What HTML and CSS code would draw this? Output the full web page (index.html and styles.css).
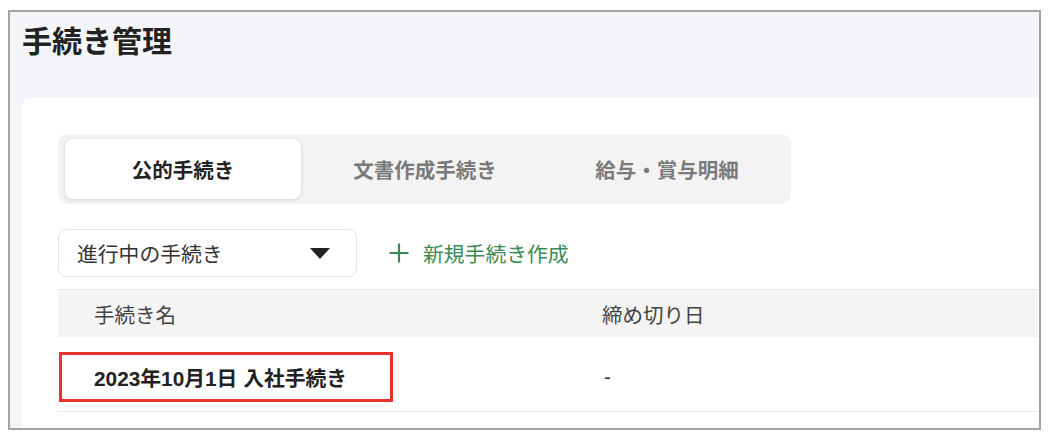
FILE: index.html
```html
<!DOCTYPE html>
<html lang="ja">
<head>
    <meta charset="UTF-8">
    <meta name="viewport" content="width=device-width, initial-scale=1.0">
    <title>手続き管理</title>
    <link rel="stylesheet" href="styles.css">
</head>
<body>
    <div class="frame">
        <h1 class="page-title">手続き管理</h1>

        <div class="card">
            <div class="tabs">
                <button class="tab active">公的手続き</button>
                <button class="tab">文書作成手続き</button>
                <button class="tab">給与・賞与明細</button>
            </div>

            <div class="toolbar">
                <div class="select">
                    <span>進行中の手続き</span>
                    <span class="caret"></span>
                </div>
                <button class="new-btn">
                    <svg width="22" height="22" viewBox="0 0 22 22" aria-hidden="true">
                        <path d="M11 1.5v19M1.5 11h19" stroke="currentColor" stroke-width="2.2" fill="none"/>
                    </svg>
                    新規手続き作成
                </button>
            </div>

            <div class="list">
                <div class="list-head">
                    <div class="col-name">手続き名</div>
                    <div>締め切り日</div>
                </div>
                <div class="list-row">
                    <div>
                        <div class="highlight">2023年10月1日 入社手続き</div>
                    </div>
                    <div class="col-date">-</div>
                </div>
            </div>
        </div>
    </div>
</body>
</html>
```

FILE: styles.css
```css
body {
    margin: 0;
    background: #fff;
    font-family: "Liberation Sans", "Noto Sans CJK JP", sans-serif;
    color: #222;
}
.frame {
    box-sizing: border-box;
    width: 1033px;
    height: 420px;
    margin: 10px 0 0 8px;
    padding: 15px 0 0 12px;
    border: 2px solid #a3a3a3;
    background: #f4f5f9;
    overflow: hidden;
}
.page-title {
    margin: 0;
    font-size: 30px;
    line-height: 30px;
    font-weight: bold;
    color: #222;
}
.card {
    margin-top: 41px;
    height: 400px;
    padding: 36px 0 0 36px;
    background: #fff;
    border-radius: 8px 0 0 0;
}
.tabs {
    display: grid;
    grid-template-columns: repeat(3, 236px);
    gap: 6px;
    width: max-content;
    padding: 5px 6px 5px 7px;
    background: #f3f3f3;
    border-radius: 10px;
}
.tab {
    height: 60px;
    border: none;
    border-radius: 8px;
    background: transparent;
    font-family: inherit;
    font-size: 20.5px;
    font-weight: bold;
    color: #7a7a7a;
    cursor: pointer;
}
.tab.active {
    background: #fff;
    color: #222;
    box-shadow: 0 1px 4px rgba(0,0,0,0.13);
}
.toolbar {
    display: flex;
    align-items: center;
    gap: 31px;
    margin-top: 25px;
}
.select {
    box-sizing: border-box;
    width: 299px;
    height: 48px;
    display: flex;
    align-items: center;
    justify-content: space-between;
    padding: 0 26px 0 18px;
    border: 1px solid #e4e4e4;
    border-radius: 8px;
    font-size: 20.8px;
    color: #333;
}
.caret {
    width: 0;
    height: 0;
    border-left: 10px solid transparent;
    border-right: 10px solid transparent;
    border-top: 11px solid #222;
}
.new-btn {
    display: flex;
    align-items: center;
    gap: 13px;
    padding: 0;
    border: none;
    background: none;
    font-family: inherit;
    font-size: 20.8px;
    color: #3b8a55;
    cursor: pointer;
}
.list {
    margin-top: 12px;
}
.list-head,
.list-row {
    display: grid;
    grid-template-columns: 544px 1fr;
    align-items: center;
}
.list-head {
    box-sizing: border-box;
    height: 48px;
    background: #f4f4f4;
    border-top: 1px solid #e9e9e9;
    font-size: 20.5px;
    color: #444;
}
.col-name { padding-left: 36px; }
.list-row {
    padding: 15px 0 9px 0;
    border-bottom: 1px solid #eeeeee;
}
.highlight {
    box-sizing: border-box;
    width: 334px;
    height: 50px;
    margin-left: 1px;
    padding-left: 32px;
    display: flex;
    align-items: center;
    border: 3px solid #e5332b;
    font-size: 20.8px;
    font-weight: bold;
    color: #222;
}
.col-date {
    padding-left: 2px;
    font-size: 20.8px;
    color: #333;
}
```
